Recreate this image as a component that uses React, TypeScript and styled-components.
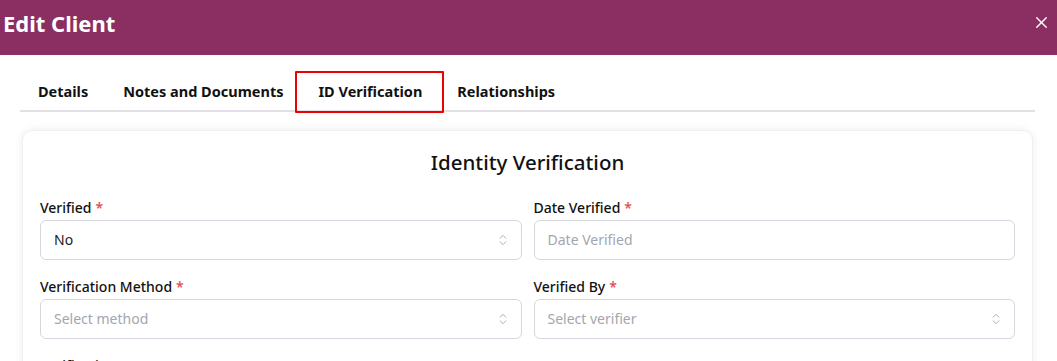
import React from 'react'
import styled, { createGlobalStyle } from 'styled-components'
import { ChevronsUpDown, X } from 'lucide-react'

const GlobalStyle = createGlobalStyle`
  body {
    margin: 0;
    background: #ffffff;
    font-family: "Noto Sans", "Open Sans", sans-serif;
    color: #111;
  }
  * { box-sizing: border-box; }
`

const Header = styled.div`
  height: 55px;
  background: #8b2e62;
  display: flex;
  align-items: center;
  justify-content: space-between;
  padding: 0 6px 10px 3px;
`

const Title = styled.h1`
  margin: 0;
  font-size: 22px;
  font-weight: 700;
  color: #fff;
`

const CloseButton = styled.button`
  border: 0;
  background: none;
  padding: 0;
  color: #fff;
  display: flex;
  cursor: pointer;
`

const Body = styled.div`
  padding: 17px 22px 0 20px;
`

const TabBar = styled.div`
  display: flex;
  border-bottom: 2px solid #e2e0e6;
  padding-left: 0.5px;
`

const Tab = styled.div<{ $active?: boolean }>`
  position: relative;
  padding: 9px 17.5px 8.5px;
  font-size: 14.5px;
  font-weight: 700;
  color: #111;
  white-space: nowrap;
  ${p => p.$active && `
    &::after {
      content: '';
      position: absolute;
      left: -6px;
      right: -4px;
      top: -1px;
      bottom: -3px;
      border: 2px solid #ee0000;
      border-radius: 1px;
    }
  `}
`

const Card = styled.div`
  margin: 18px 2px 0 2px;
  background: #fff;
  border-radius: 10px;
  box-shadow: 0 0 10px rgba(0, 0, 0, 0.07);
  border: 1px solid #f0f0f3;
  padding: 17px 17px 20px 17px;
`

const CardTitle = styled.h2`
  margin: 0 0 22px;
  text-align: center;
  font-size: 20.5px;
  font-weight: 500;
  color: #111;
`

const Grid = styled.div`
  display: grid;
  grid-template-columns: 1fr 1fr;
  column-gap: 12px;
  row-gap: 17px;
`

const Field = styled.div`
  display: flex;
  flex-direction: column;
  gap: 3px;
`

const Label = styled.label`
  font-size: 14px;
  font-weight: 500;
  color: #111;
`

const Required = styled.span`
  color: #e5484d;
  margin-left: 4px;
`

const Control = styled.div<{ $placeholder?: boolean }>`
  height: 40px;
  border: 1px solid #d6d6de;
  border-radius: 6px;
  display: flex;
  align-items: center;
  justify-content: space-between;
  padding: 0 11px 0 13px;
  font-size: 14px;
  color: ${p => (p.$placeholder ? '#a3a6b0' : '#222')};
`

const ChevronIcon = styled(ChevronsUpDown)`
  color: #9a9ca4;
`

const FullRow = styled.div`
  grid-column: 1 / -1;
`

type FieldDef = { label: string; value: string; placeholder?: boolean; select?: boolean }

const fields: FieldDef[] = [
  { label: 'Verified', value: 'No', select: true },
  { label: 'Date Verified', value: 'Date Verified', placeholder: true },
  { label: 'Verification Method', value: 'Select method', placeholder: true, select: true },
  { label: 'Verified By', value: 'Select verifier', placeholder: true, select: true },
]

const tabs = ['Details', 'Notes and Documents', 'ID Verification', 'Relationships']

export default function App() {
  return (
    <>
      <GlobalStyle />
      <Header>
        <Title>Edit Client</Title>
        <CloseButton aria-label="Close">
          <X size={19} strokeWidth={1.8} />
        </CloseButton>
      </Header>
      <Body>
        <TabBar>
          {tabs.map(t => (
            <Tab key={t} $active={t === 'ID Verification'}>{t}</Tab>
          ))}
        </TabBar>
        <Card>
          <CardTitle>Identity Verification</CardTitle>
          <Grid>
            {fields.map(f => (
              <Field key={f.label}>
                <Label>
                  {f.label}
                  <Required>*</Required>
                </Label>
                <Control $placeholder={f.placeholder}>
                  <span>{f.value}</span>
                  {f.select && <ChevronIcon size={14} strokeWidth={1.4} />}
                </Control>
              </Field>
            ))}
            <FullRow>
              <Field>
                <Label>Verification Notes</Label>
              </Field>
            </FullRow>
          </Grid>
        </Card>
      </Body>
    </>
  )
}
